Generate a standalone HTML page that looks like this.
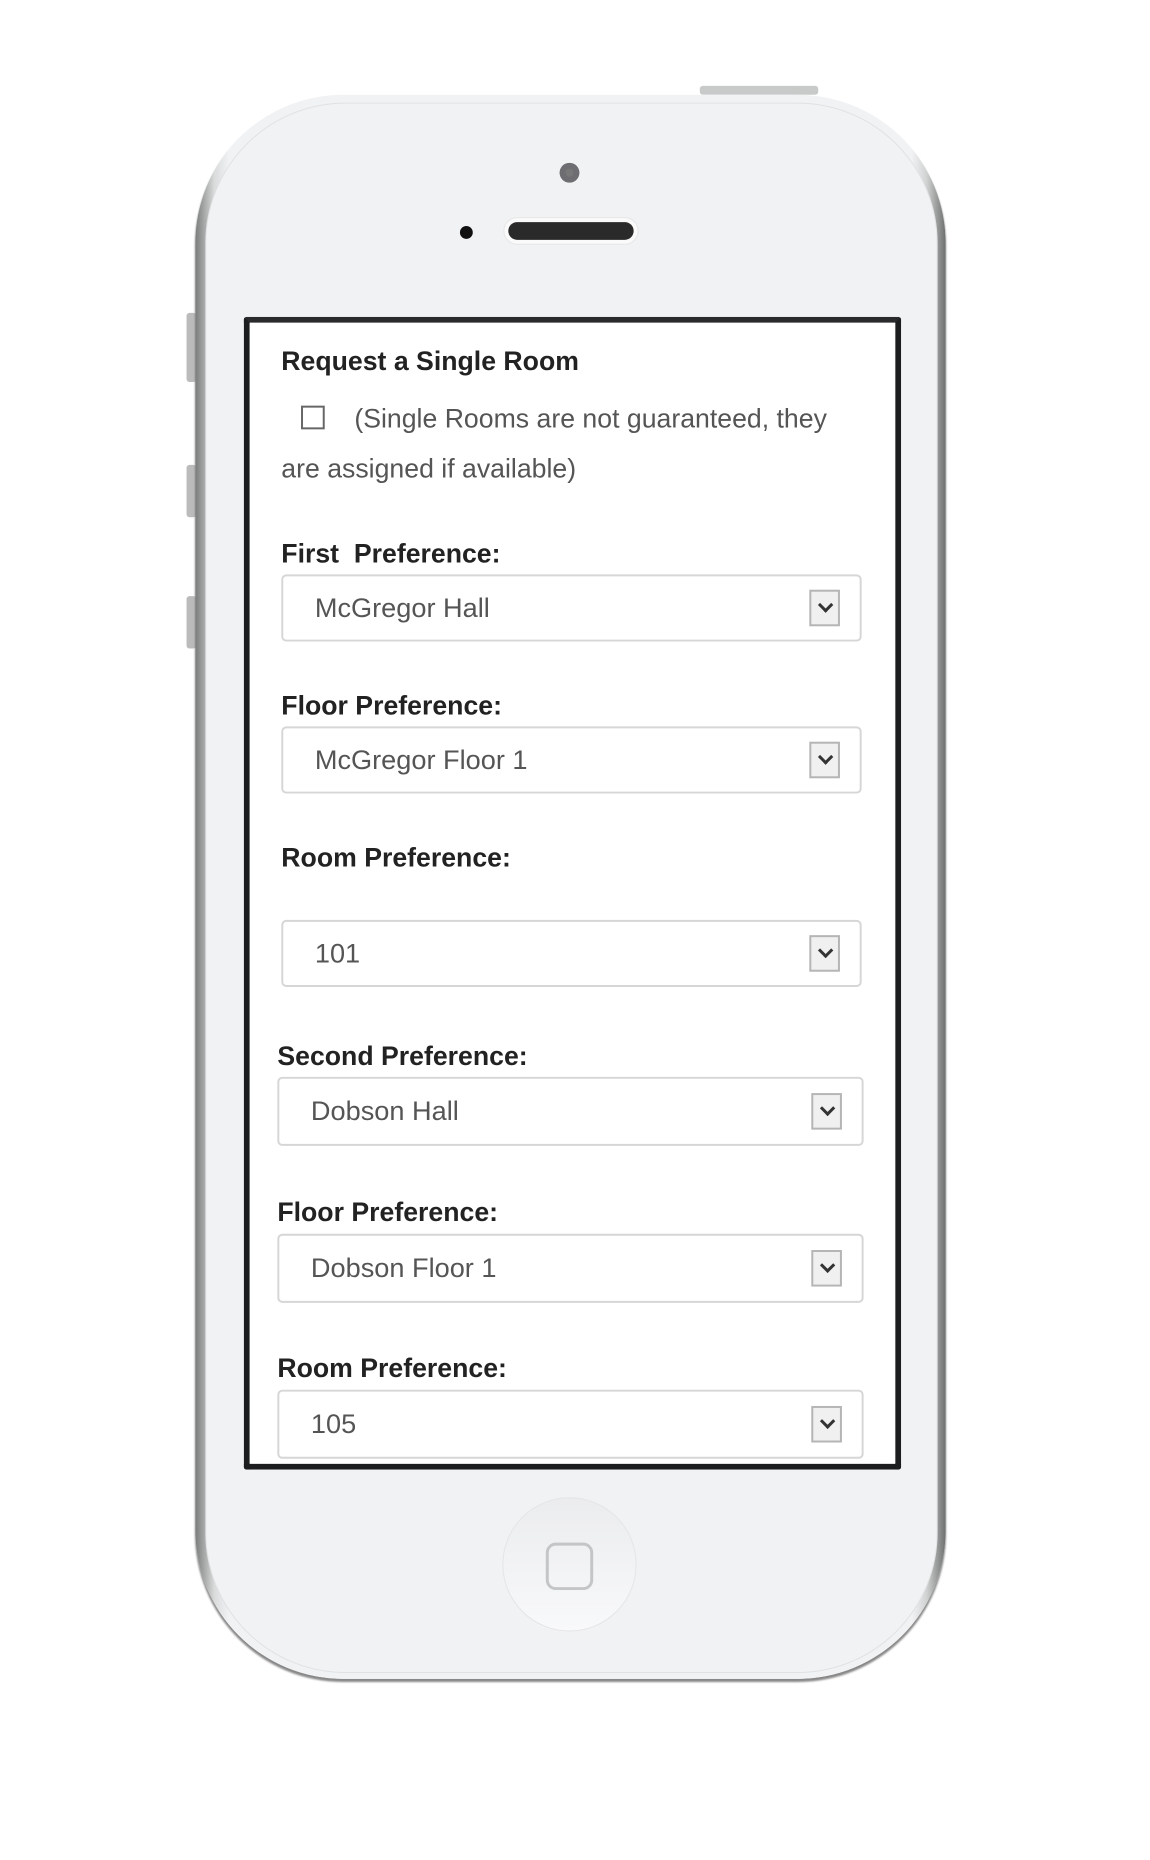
<!DOCTYPE html>
<html><head><style>
body{margin:0;width:1150px;height:1860px;background:#fff;position:relative;overflow:hidden;font-family:"Liberation Sans",sans-serif}
#w{position:absolute;left:0;top:0;width:1150px;height:1860px;transform:scale(0.987);transform-origin:0 0}
.abs{position:absolute}
.body{left:198px;top:96px;width:760px;height:1605px;border-radius:150px;background:linear-gradient(90deg,#7a7c7c,#d9dbdb 2.5%,#f1f2f4 4.5%,#f1f2f4 95.5%,#d0d2d2 97.5%,#6e7070);box-shadow:0 3px 2px #888}
.inner{left:208px;top:104px;width:740px;height:1589px;border-radius:142px;background:#f1f2f4;border:1px solid #e0e1e3}
.screen{left:247px;top:321px;width:654px;height:1156px;border:6px solid #1c1d1f;border-top-color:#2a2a2c;background:#fff;overflow:hidden;border-radius:3px}
.lbl{position:absolute;font-weight:bold;font-size:27px;color:#222}
.txt{position:absolute;font-size:27px;color:#555}
.sel{position:absolute;border:2px solid #d6d6d6;border-radius:5px;background:#fff}
.sel span{position:absolute;left:32px;top:50%;transform:translateY(-50%);font-size:27.5px;color:#555}
.sel i{position:absolute;right:20px;top:50%;transform:translateY(-50%);width:31px;height:37px;border:2px solid #b5b5b5;background:#f0f0f0;box-sizing:border-box}
.sel i:after{content:"";position:absolute;left:9px;top:8px;width:8px;height:8px;border-right:3px solid #333;border-bottom:3px solid #333;transform:rotate(45deg)}
</style></head><body><div id="w">
<div class="abs" style="left:709px;top:87px;width:120px;height:9px;background:#c8caca;border-radius:3px"></div>
<div class="abs" style="left:189px;top:317px;width:10px;height:70px;background:#bbb;border-radius:3px"></div>
<div class="abs" style="left:189px;top:471px;width:10px;height:53px;background:#bbb;border-radius:3px"></div>
<div class="abs" style="left:189px;top:604px;width:10px;height:53px;background:#bbb;border-radius:3px"></div>
<div class="abs body"></div>
<div class="abs inner"></div>
<div class="abs" style="left:567px;top:165px;width:20px;height:20px;border-radius:50%;background:#777;box-shadow:inset 0 0 0 6px #6e6e72"></div>
<div class="abs" style="left:466px;top:229px;width:13px;height:13px;border-radius:50%;background:#111"></div>
<div class="abs" style="left:510px;top:220px;width:137px;height:28px;border-radius:14px;background:#fafafa;border:1px solid #e6e6e6;box-sizing:border-box"></div>
<div class="abs" style="left:515px;top:225px;width:127px;height:18px;border-radius:9px;background:#2a2a2a"></div>
<div class="abs screen">
 <div class="lbl" style="left:32px;top:24px">Request a Single Room</div>
 <div class="abs" style="left:52px;top:84px;width:24px;height:24px;border:2px solid #666;box-sizing:border-box"></div>
 <div class="txt" style="left:106px;top:82px">(Single Rooms are not guaranteed, they</div>
 <div class="txt" style="left:32px;top:133px">are assigned if available)</div>
 <div class="lbl" style="left:32px;top:219px">First&nbsp; Preference:</div>
 <div class="sel" style="left:32px;top:255px;width:584px;height:64px"><span>McGregor Hall</span><i></i></div>
 <div class="lbl" style="left:32px;top:373px">Floor Preference:</div>
 <div class="sel" style="left:32px;top:409px;width:584px;height:64px"><span>McGregor Floor 1</span><i></i></div>
 <div class="lbl" style="left:32px;top:527px">Room Preference:</div>
 <div class="sel" style="left:32px;top:605px;width:584px;height:64px"><span>101</span><i></i></div>
 <div class="lbl" style="left:28px;top:728px">Second Preference:</div>
 <div class="sel" style="left:28px;top:764px;width:590px;height:66px"><span>Dobson Hall</span><i></i></div>
 <div class="lbl" style="left:28px;top:886px">Floor Preference:</div>
 <div class="sel" style="left:28px;top:923px;width:590px;height:66px"><span>Dobson Floor 1</span><i></i></div>
 <div class="lbl" style="left:28px;top:1044px">Room Preference:</div>
 <div class="sel" style="left:28px;top:1081px;width:590px;height:66px"><span>105</span><i></i></div>
</div>
<div class="abs" style="left:509px;top:1517px;width:136px;height:136px;border-radius:50%;background:linear-gradient(#ebecee,#f8f9fa);border:1px solid #e4e5e7;box-sizing:border-box"></div>
<div class="abs" style="left:553px;top:1563px;width:48px;height:48px;border:3px solid #c4c5c7;border-radius:10px;box-sizing:border-box"></div>
</div></body></html>
